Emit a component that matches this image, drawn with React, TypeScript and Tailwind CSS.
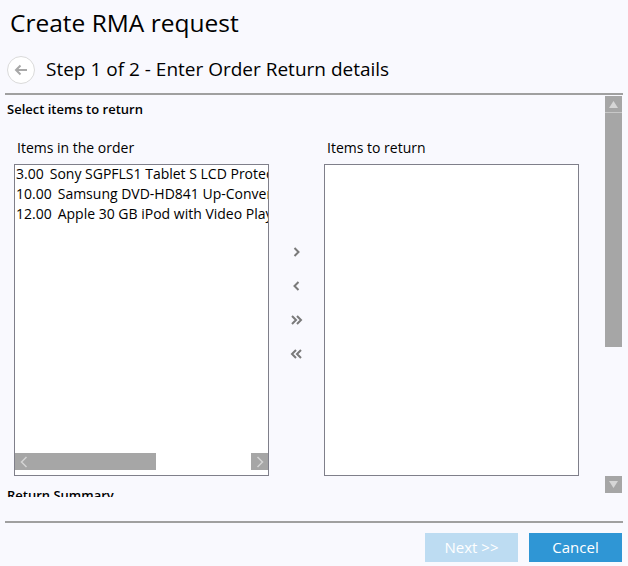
import React from 'react';

const font = { fontFamily: '"Segoe UI", "Open Sans", "Noto Sans", sans-serif' };

const orderItems = [
  { qty: '3.00', name: 'Sony SGPFLS1 Tablet S LCD Protector' },
  { qty: '10.00', name: 'Samsung DVD-HD841 Up-Converting DVD Player' },
  { qty: '12.00', name: 'Apple 30 GB iPod with Video Playback' },
];

const Chevron: React.FC<{ dir: 'right' | 'left' | 'rr' | 'll' }> = ({ dir }) => {
  const single = dir === 'right' || dir === 'left';
  const pts =
    dir === 'right' || dir === 'rr' ? ['2,1 6,5 2,9', '7,1 11,5 7,9'] : ['6,1 2,5 6,9', '11,1 7,5 11,9'];
  return (
    <svg width="13" height="10" viewBox="0 0 13 10" className="block">
      {single ? (
        <polyline
          points={dir === 'right' ? '4.5,1 8.5,5 4.5,9' : '8.5,1 4.5,5 8.5,9'}
          fill="none"
          stroke="#7a7a7a"
          strokeWidth="2"
        />
      ) : (
        pts.map((p) => <polyline key={p} points={p} fill="none" stroke="#7a7a7a" strokeWidth="2" />)
      )}
    </svg>
  );
};

const ListBox: React.FC<{ items?: typeof orderItems; scroll?: boolean }> = ({ items = [], scroll }) => (
  <div className="relative h-[312px] w-[255px] border border-[#7f7f8a] bg-white overflow-hidden">
    <div className="-mt-px flex flex-col pl-px">
      {items.map((it) => (
        <div key={it.qty} className="flex gap-[6px] whitespace-nowrap text-[14px] leading-[20px] text-black">
          <span>{it.qty}</span>
          <span>{it.name}</span>
        </div>
      ))}
    </div>
    {scroll && (
      <div className="absolute bottom-[5px] left-0 right-0 flex h-[17px] justify-between">
        <div className="flex w-[141px] items-center bg-[#a6a6a6] pl-[5px]">
          <svg width="8" height="12" viewBox="0 0 8 12">
            <polyline points="6.5,1 1.5,6 6.5,11" fill="none" stroke="#d4d4d4" strokeWidth="1.5" />
          </svg>
        </div>
        <div className="flex w-[17px] items-center justify-center bg-[#a6a6a6]">
          <svg width="8" height="12" viewBox="0 0 8 12">
            <polyline points="1.5,1 6.5,6 1.5,11" fill="none" stroke="#d4d4d4" strokeWidth="1.5" />
          </svg>
        </div>
      </div>
    )}
  </div>
);

export default function App() {
  return (
    <div className="flex h-[566px] w-[628px] flex-col bg-[#f9f9fe] text-black" style={font}>
      <div className="h-[50px] pl-[10px] pt-[6px] text-[24.5px] leading-[34px]">Create RMA request</div>

      <div className="flex h-[43px] items-start gap-[11px] pl-[7px] pt-[6px]">
        <div className="flex h-[28px] w-[28px] items-center justify-center rounded-full border border-[#dadada] bg-white">
          <svg width="14" height="12" viewBox="0 0 14 12">
            <path d="M13 6H2M6.5 1.5 2 6l4.5 4.5" fill="none" stroke="#a8a8a8" strokeWidth="2" />
          </svg>
        </div>
        <div className="text-[19px] leading-[26px]">Step 1 of 2 - Enter Order Return details</div>
      </div>

      <div className="mx-[5px] h-[2px] bg-[#a0a0a0]" />

      <div className="flex h-[402px]">
        <div className="flex-1 overflow-hidden">
          <div className="pl-[7px] pt-[5px] text-[13px] font-semibold leading-[18px]">Select items to return</div>

          <div className="flex pl-[14px] pt-[20px]">
            <div className="flex flex-col">
              <div className="h-[26px] pl-[3px] text-[14px] leading-[20px]">Items in the order</div>
              <ListBox items={orderItems} scroll />
            </div>
            <div className="flex w-[55px] flex-col items-center gap-[24px] pt-[109px]">
              <Chevron dir="right" />
              <Chevron dir="left" />
              <Chevron dir="rr" />
              <Chevron dir="ll" />
            </div>
            <div className="flex flex-col">
              <div className="h-[26px] pl-[3px] text-[14px] leading-[20px]">Items to return</div>
              <ListBox />
            </div>
          </div>

          <div className="pl-[7px] pt-[10px] text-[13px] font-semibold leading-[18px]">Return Summary</div>
        </div>

        <div className="mr-[6px] mt-px flex h-[397px] w-[17px] flex-col">
          <div className="flex h-[17px] items-center justify-center border-b border-[#c8c8c8] bg-[#a6a6a6]">
            <svg width="9" height="7" viewBox="0 0 9 7">
              <polygon points="4.5,0 9,7 0,7" fill="#d6d6d6" />
            </svg>
          </div>
          <div className="h-[234px] bg-[#a6a6a6]" />
          <div className="flex-1" />
          <div className="flex h-[17px] items-center justify-center bg-[#a6a6a6]">
            <svg width="9" height="7" viewBox="0 0 9 7">
              <polygon points="0,0 9,0 4.5,7" fill="#d6d6d6" />
            </svg>
          </div>
        </div>
      </div>

      <div className="mx-[5px] mt-[24px] h-[2px] bg-[#a0a0a0]" />

      <div className="flex justify-end gap-[11px] pr-[6px] pt-[10px]">
        <button className="h-[29px] w-[93px] bg-[#bddcf2] text-[15px] text-white">Next &gt;&gt;</button>
        <button className="h-[29px] w-[93px] bg-[#2f96d5] text-[15px] text-white">Cancel</button>
      </div>
    </div>
  );
}
